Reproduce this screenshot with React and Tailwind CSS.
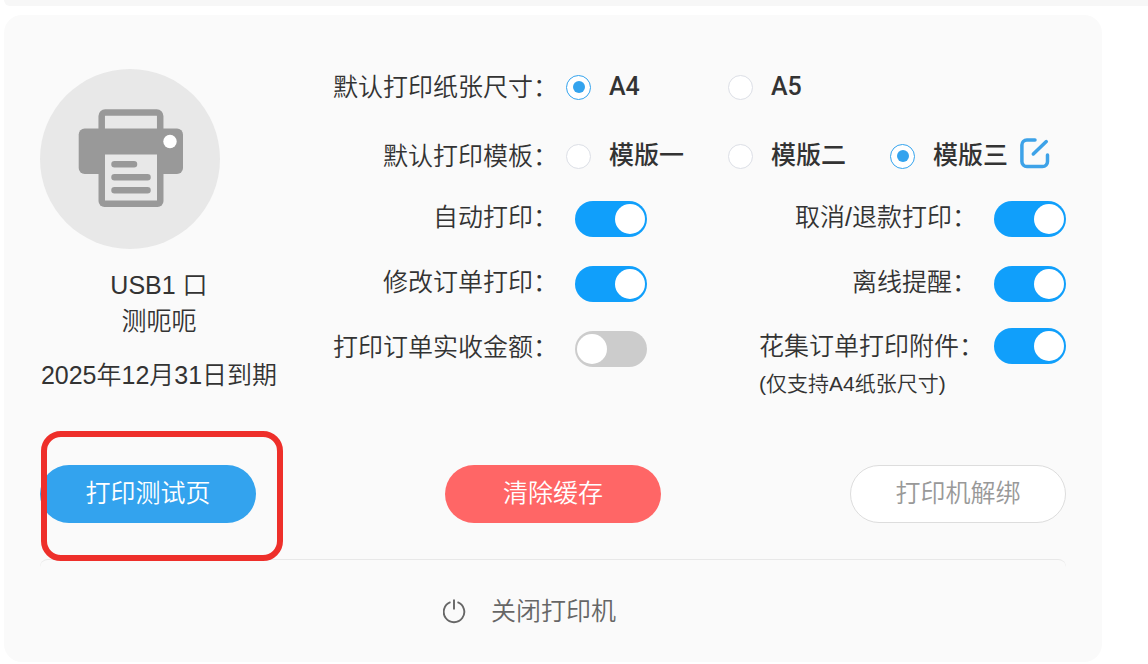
import { useState } from "react";

const PAPER_SIZES = ["A4", "A5"];
const TEMPLATES = ["模版一", "模版二", "模版三"];

function PrinterIcon() {
  return (
    <svg viewBox="0 0 180 180" className="size-full" aria-hidden="true">
      <path
        d="M61.700 66V47a3.500 3.500 0 0 1 3.500-3.500h51.500a3.500 3.500 0 0 1 3.500 3.500v19"
        fill="none"
        stroke="#999"
        strokeWidth="6.500"
      />
      <rect x="38.700" y="59.500" width="104.300" height="45.500" rx="6" fill="#999" />
      <path
        d="M58.500 90h65v42a6 6 0 0 1-6 6h-53a6 6 0 0 1-6-6z"
        fill="#999"
      />
      <path d="M65 85.500h52v46H65z" fill="#e8e8e8" />
      <path
        d="M74.500 95.300h19.500M74.500 108.300h33M74.500 121.300h33"
        stroke="#999"
        strokeWidth="6.500"
        strokeLinecap="round"
      />
      <circle cx="130" cy="72.500" r="6.700" fill="#fff" />
    </svg>
  );
}

function EditIcon() {
  return (
    <svg width="30" height="31" viewBox="0 0 30 31" fill="none" aria-hidden="true">
      <path
        d="M15 1.900H7A5 5 0 0 0 1.900 7v16.500A5 5 0 0 0 7 28.600h15.500a5 5 0 0 0 5-5.100v-6.500M26.300 3.600 13.300 16"
        stroke="#3da2e8"
        strokeWidth="3.500"
        strokeLinecap="round"
      />
    </svg>
  );
}

function PowerIcon() {
  return (
    <svg width="24" height="26" viewBox="0 0 24 26" fill="none" aria-hidden="true">
      <path
        d="M7.500 4.200A10.300 10.300 0 1 0 14.500 4.200M11 1.500v10"
        stroke="#666"
        strokeWidth="1.900"
      />
    </svg>
  );
}

function RadioRow({ name, label, options, value, onChange, children }) {
  return (
    <div className="flex gap-2">
      <span id={`${name}-label`} className="w-[226px] shrink-0 text-right whitespace-nowrap">
        {label}
      </span>
      <div role="radiogroup" aria-labelledby={`${name}-label`} className="flex">
        {options.map((option) => (
          <label
            key={option}
            className="flex w-[162px] items-center gap-[18px] font-['Roboto','Noto_Sans_CJK_SC',sans-serif] font-medium whitespace-nowrap"
          >
            <input
              type="radio"
              name={name}
              value={option}
              checked={value === option}
              onChange={() => onChange(option)}
              className="grid size-[25px] shrink-0 appearance-none place-content-center rounded-full border border-[#dcdfe6] bg-white before:size-3 before:rounded-full checked:border-[#33a3ee] checked:before:bg-[#33a3ee]"
            />
            {option}
          </label>
        ))}
      </div>
      {children}
    </div>
  );
}

function SwitchRow({ id, label, note, defaultChecked = true }) {
  const [on, setOn] = useState(defaultChecked);

  return (
    <div className={`flex justify-end ${note ? "-mt-[3px] gap-[10px]" : "gap-[17px]"}`}>
      <label
        htmlFor={id}
        className={`h-9 whitespace-nowrap ${note ? "leading-9" : "leading-8"}`}
      >
        {label}
        {note && <span className="mt-0.5 block text-[21px]">{note}</span>}
      </label>
      <input
        id={id}
        type="checkbox"
        role="switch"
        checked={on}
        onChange={(e) => setOn(e.target.checked)}
        className="flex h-9 w-[72px] shrink-0 appearance-none items-center rounded-full bg-[#ccc] px-[2px] before:size-[30px] before:rounded-full before:bg-white checked:justify-end checked:bg-[#109ffb]"
      />
    </div>
  );
}

export default function App() {
  const [paper, setPaper] = useState("A4");
  const [template, setTemplate] = useState("模版三");

  return (
    <div className="min-h-screen bg-white pl-1 font-['Liberation_Sans','Noto_Sans_CJK_SC',sans-serif] text-[25px] leading-9 font-[350] text-[#333]">
      <div className="h-[6px] rounded-bl-[18px] bg-[#f7f7f7]" />

      <main className="mt-[9px] mr-[46px] rounded-[18px] bg-[#fafafa] px-9 pt-[54px] pb-[33px]">
        <div className="flex gap-[54px]">
          {/* Printer info */}
          <section className="w-[238px] shrink-0 text-center whitespace-nowrap">
            <div className="size-[180px] rounded-full bg-[#e8e8e8]">
              <PrinterIcon />
            </div>
            <p className="mt-[18px]">USB1 口</p>
            <p>测呃呃</p>
            <p className="mt-[18px]">2025年12月31日到期</p>
          </section>

          {/* Print settings */}
          <section className="min-w-0 flex-1">
            <div className="flex flex-col gap-[33px]">
              <RadioRow
                name="paper"
                label="默认打印纸张尺寸："
                options={PAPER_SIZES}
                value={paper}
                onChange={setPaper}
              />
              <RadioRow
                name="template"
                label="默认打印模板："
                options={TEMPLATES}
                value={template}
                onChange={setTemplate}
              >
                <button
                  type="button"
                  aria-label="编辑模版"
                  className="-ml-10 h-[30px] shrink-0"
                >
                  <EditIcon />
                </button>
              </RadioRow>
            </div>

            <div className="mt-[27px] flex justify-between">
              <div className="flex w-[315px] flex-col gap-[29px]">
                <SwitchRow id="auto-print" label="自动打印：" />
                <SwitchRow id="edit-print" label="修改订单打印：" />
                <SwitchRow
                  id="amount-print"
                  label="打印订单实收金额："
                  defaultChecked={false}
                />
              </div>
              <div className="flex flex-col gap-[29px]">
                <SwitchRow id="refund-print" label="取消/退款打印：" />
                <SwitchRow id="offline-alert" label="离线提醒：" />
                <SwitchRow
                  id="attachment-print"
                  label="花集订单打印附件："
                  note="(仅支持A4纸张尺寸)"
                />
              </div>
            </div>
          </section>
        </div>

        {/* Actions */}
        <div className="mt-[72px] flex justify-between">
          <div className="relative">
            <button
              type="button"
              className="h-[58px] w-[216px] rounded-full bg-[#33a3ee] pb-0.5 text-white"
            >
              打印测试页
            </button>
            <div className="pointer-events-none absolute -top-[34px] left-px h-[130px] w-[242px] rounded-[20px] border-6 border-[#ee2f2a]" />
          </div>
          <button
            type="button"
            className="h-[58px] w-[216px] rounded-full bg-[#ff6666] pb-0.5 text-white"
          >
            清除缓存
          </button>
          <button
            type="button"
            className="h-[58px] w-[216px] rounded-full border border-[#ddd] bg-white pb-0.5 text-[#999]"
          >
            打印机解绑
          </button>
        </div>

        <div className="mt-9 flex justify-center rounded-t-lg border-t border-[#e8e8e8] pt-[33px] pr-[47px]">
          <button type="button" className="flex items-center gap-6 text-[#666]">
            <PowerIcon />
            关闭打印机
          </button>
        </div>
      </main>
    </div>
  );
}
